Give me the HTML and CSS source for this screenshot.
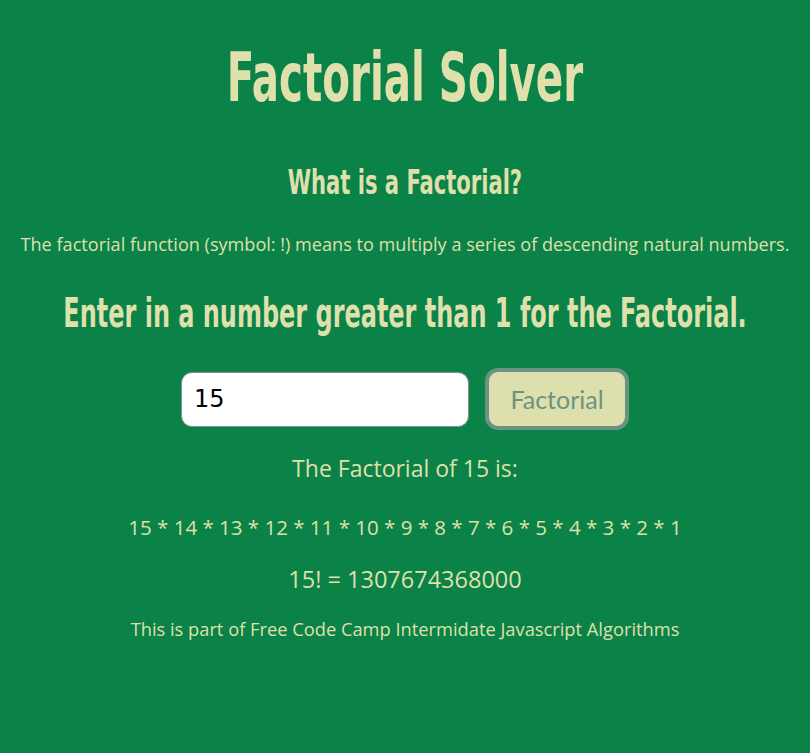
FILE: index.html
```html
<!DOCTYPE html>
<html>
<head>
<meta charset="utf-8">
<link rel="stylesheet" href="styles.css">
</head>
<body>
<main class="page">
  <h1 class="title"><span class="narrow">Factorial Solver</span></h1>
  <h2 class="subtitle"><span class="narrow">What is a Factorial?</span></h2>
  <p class="intro">The factorial function (symbol: !) means to multiply a series of descending natural numbers.</p>
  <h2 class="prompt"><span class="narrow">Enter in a number greater than 1 for the Factorial.</span></h2>
  <div class="form">
    <input class="num" type="text" value="15">
    <button class="btn">Factorial</button>
  </div>
  <p class="result-head">The Factorial of 15 is:</p>
  <p class="result-chain">15 * 14 * 13 * 12 * 11 * 10 * 9 * 8 * 7 * 6 * 5 * 4 * 3 * 2 * 1</p>
  <p class="result-value">15! = 1307674368000</p>
  <p class="footer">This is part of Free Code Camp Intermidate Javascript Algorithms</p>
</main>
</body>
</html>
```
FILE: styles.css
```css
html, body {
  margin: 0;
  padding: 0;
  background: #0b8248;
  height: 100%;
  overflow: hidden;
}
.page {
  display: flex;
  flex-direction: column;
  align-items: center;
  color: #dfe0ab;
  font-family: "Open Sans", sans-serif;
  font-weight: 400;
  text-align: center;
}
.page p {
  margin: 0;
  white-space: nowrap;
}
.title, .subtitle, .prompt {
  font-family: "DejaVu Sans Condensed", "DejaVu Sans", sans-serif;
  font-weight: bold;
  margin: 0;
  white-space: nowrap;
  align-self: stretch;
  display: flex;
  justify-content: center;
}
.narrow {
  display: block;
  flex: none;
  transform-origin: 50% 50%;
}
.title {
  font-size: 67px;
  line-height: 80px;
  margin-top: 38px;
}
.title .narrow { transform: scaleX(0.67); }
.subtitle {
  font-size: 34px;
  line-height: 40px;
  margin-top: 44px;
}
.subtitle .narrow { transform: scaleX(0.69); }
.intro {
  font-size: 18.1px;
  line-height: 24px;
  margin-top: 30px !important;
}
.prompt {
  font-size: 40px;
  line-height: 46px;
  margin-top: 34px;
}
.prompt .narrow { transform: scaleX(0.666); }
.form {
  display: flex;
  align-items: center;
  gap: 16px;
  margin-top: 32px;
}
.num {
  width: 288px;
  height: 55px;
  box-sizing: border-box;
  border: 1px solid #8a8f8c;
  border-radius: 11px;
  background: #fff;
  font-family: "DejaVu Sans", sans-serif;
  font-size: 24px;
  padding: 0 12px;
  color: #000;
}
.btn {
  width: 144px;
  height: 62px;
  box-sizing: border-box;
  border: 4px solid #6a9384;
  border-radius: 13px;
  background: #dddfac;
  color: #6a9384;
  font-family: Lato, sans-serif;
  font-size: 25px;
  font-weight: 400;
  padding: 0;
}
.result-head {
  font-size: 23px;
  line-height: 28px;
  margin-top: 24px !important;
}
.result-chain {
  font-size: 20.5px;
  line-height: 28px;
  margin-top: 31px !important;
}
.result-value {
  font-size: 23.5px;
  line-height: 28px;
  margin-top: 24px !important;
}
.footer {
  font-size: 18.3px;
  line-height: 24px;
  margin-top: 24px !important;
}
```
